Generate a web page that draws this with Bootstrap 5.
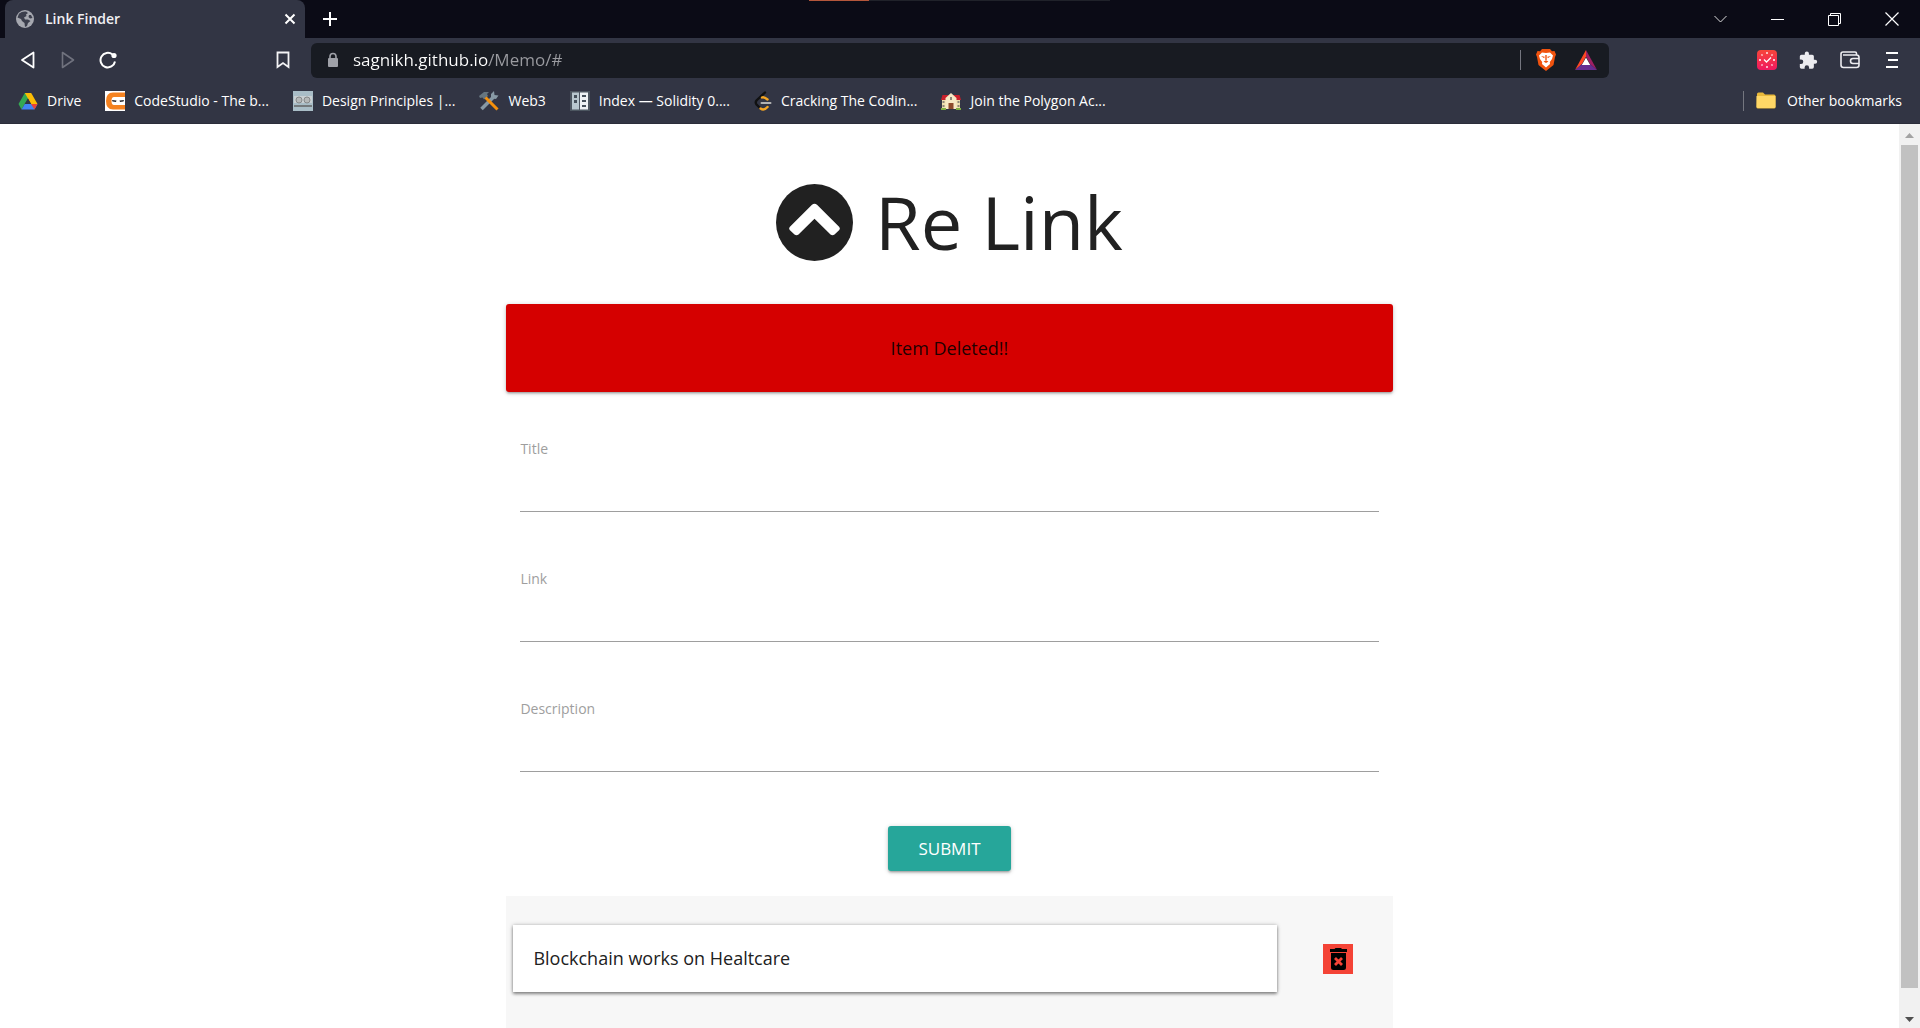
<!DOCTYPE html>
<html lang="en">
<head>
<meta charset="utf-8">
<meta name="viewport" content="width=device-width, initial-scale=1">
<title>Link Finder</title>
<link href="https://cdn.jsdelivr.net/npm/bootstrap@5.3.0/dist/css/bootstrap.min.css" rel="stylesheet">
<style>
  body { font-family: "Open Sans", "Noto Sans", sans-serif; background: #fff; }
  svg { display: block; flex: none; }
  button { color: inherit; }
  .icon-btn { background: none; border: 0; padding: 0; display: flex; align-items: center; justify-content: center; flex: none; }

  /* browser chrome */
  .tabstrip { background: #0b0b16; height: 38px; color: #fff; }
  .load-line { position: absolute; top: 0; left: 809px; width: 301px; height: 1px; background: #20222a; }
  .load-line::before { content: ""; display: block; width: 60px; height: 1px; background: #b5573b; }
  .browser-tab { background: #323544; width: 300px; margin-left: 5px; padding: 0 8px 0 11px; border-radius: 8px 8px 0 0; color: #f0f0f3; }
  .tab-title { font-size: 14px; line-height: 20px; font-weight: 600; margin-left: 11px; }
  .win-btn { width: 57px; height: 38px; }
  .toolbar { background: #323544; height: 44px; color: #f0f0f3; padding: 0 18px 0 12px; }
  .nav-btn { width: 32px; height: 32px; margin-right: 8px; }
  .save-btn { width: 32px; height: 32px; margin-left: 135px; margin-right: 12px; }
  .address { background: #181b22; height: 35px; border-radius: 6px; padding: 0 12px 0 14px; min-width: 0; }
  .address .icon-btn { margin-left: 15px; }
  .url-box { border: 0; outline: 0; padding: 0; margin-left: 12px; min-width: 0; font-size: 17px; line-height: 24px; color: transparent;
    background: linear-gradient(90deg, #fff 136px, #9a9ba0 136px); -webkit-background-clip: text; background-clip: text; }
  .extensions { margin-left: 148px; gap: 22px; }
  .divider { width: 1px; height: 20px; background: #74767f; flex: none; }
  .bookmarks { background: #323544; height: 42px; padding: 0 18px 4px 18px; font-size: 14px; line-height: 20px; gap: 24px; border-bottom: 1px solid #2b2d3a; }
  .bookmarks a { color: #fff; text-decoration: none; display: flex; align-items: center; gap: 9px; white-space: nowrap; }
  .bookmarks .other-marks { margin-left: -12px; gap: 11px; }

  /* page */
  .page-view { min-height: 0; overflow: hidden; }
  .scroll-track { width: 21px; background: #f1f1f1; flex: none; padding: 0 2px; }
  .scroll-thumb { background: #c1c1c1; }
  .sheet { width: 46.667%; padding-top: 43px; }
  .brand-title { font-size: 74px; line-height: 110px; font-weight: 400; color: #212121; gap: 22px; margin: 0 0 27px; }
  .z-shadow { box-shadow: 0 2px 2px 0 rgba(0,0,0,.14), 0 3px 1px -2px rgba(0,0,0,.12), 0 1px 5px 0 rgba(0,0,0,.2); }
  .z-shadow-strong { box-shadow: 0 2px 3px 0 rgba(0,0,0,.4), 0 0 4px 0 rgba(0,0,0,.25); }
  .notice { background: #d50000; color: rgba(0,0,0,.87); height: 88px; border-radius: 3px; font-size: 18px; margin-bottom: 30px; }
  .field { padding: 14px 14px 0; height: 130px; }
  .field label { display: block; color: #9e9e9e; font-size: 14px; line-height: 26px; }
  .field input { border: 0; border-bottom: 1px solid #9e9e9e; border-radius: 0; padding: 0; height: 50px; width: 100%; display: block; outline: 0; background: none; }
  .submit-btn { background: #26a69a; color: #fff; border: 0; border-radius: 3px; width: 123px; height: 45px; font-size: 17px; margin-top: 14px; }
  .link-list { background: #f7f7f7; padding: 29px 40px 60px 7px; margin-top: 25px; }
  .link-item { background: #fff; height: 67px; padding: 0 20px; font-size: 18px; color: #212121; text-decoration: none; }
  .delete-btn { background: #f44336; width: 30px; height: 30px; margin-left: 46px; color: #000; }
</style>
</head>
<body class="d-flex flex-column vh-100 overflow-hidden">
<header>
  <div class="tabstrip d-flex position-relative">
    <div class="load-line"></div>
    <div class="browser-tab d-flex align-items-center">
      <svg width="18" height="18" viewBox="0 0 18 18"><circle cx="9" cy="9" r="9" fill="#a6a8b0"/><path d="M3 3.800Q6 1 10 1.500L12 3 10 4.500 10.500 6 8 7.500 9 9.500H12L14.500 11 12 13 11 16 9 17 8.500 13 6 11 5 9 1.500 7.500ZM13 5 15 5 16.500 8 14 8.500 12.500 7Z" fill="#3b3e4c"/></svg>
      <span class="tab-title flex-grow-1">Link Finder</span>
      <button class="icon-btn" aria-label="Close tab"><svg width="14" height="14" viewBox="0 0 14 14" stroke="#fff" stroke-width="2"><path d="M2.500 2.500 11.500 11.500M11.500 2.500 2.500 11.500"/></svg></button>
    </div>
    <button class="icon-btn ms-3" aria-label="New tab"><svg width="18" height="16" viewBox="0 0 18 16" stroke="#fff" stroke-width="2"><path d="M9 1V15M2 8H16"/></svg></button>
    <div class="d-flex ms-auto">
      <button class="icon-btn win-btn" aria-label="Tabs"><svg width="14" height="14" viewBox="0 0 14 14" stroke="#ddd" fill="none"><path d="M.5 4 6.500 10 12.500 4"/></svg></button>
      <button class="icon-btn win-btn" aria-label="Minimise"><svg width="13" height="13" viewBox="0 0 13 13" stroke="#fff"><path d="M0 6.500H13"/></svg></button>
      <button class="icon-btn win-btn" aria-label="Restore"><svg width="13" height="13" viewBox="0 0 13 13" stroke="#fff" fill="none"><path d="M.5 2.500H10.500V12.500H.5ZM2.500 2V.5H12.500V10.500H11"/></svg></button>
      <button class="icon-btn win-btn" aria-label="Close"><svg width="14" height="14" viewBox="0 0 14 14" stroke="#fff" stroke-width="1.200"><path d="M.5.5 13.500 13.500M13.500.5.5 13.500"/></svg></button>
    </div>
  </div>
  <div class="toolbar d-flex align-items-center">
    <button class="icon-btn nav-btn" aria-label="Back"><svg width="16" height="18" viewBox="0 0 16 18" fill="none" stroke="#fff" stroke-width="1.800" stroke-linejoin="round"><path d="M13.500 1.500V16.500L2 9Z"/></svg></button>
    <button class="icon-btn nav-btn" aria-label="Forward"><svg width="16" height="18" viewBox="0 0 16 18" fill="none" stroke="#70727e" stroke-width="1.600" stroke-linejoin="round"><path d="M2.500 1.500V16.500L13.500 9Z"/></svg></button>
    <button class="icon-btn nav-btn" aria-label="Reload"><svg width="18" height="18" viewBox="0 0 18 18" fill="none" stroke="#fff" stroke-width="2"><path d="M13.500 3.500A7.300 7.300 0 1 0 16 10.500"/><circle cx="15" cy="4.500" r="2.600" fill="#fff" stroke="none"/></svg></button>
    <button class="icon-btn save-btn" aria-label="Bookmark this tab"><svg width="14" height="18" viewBox="0 0 14 18" fill="none" stroke="#f4f4f6" stroke-width="1.800"><path d="M1.500 1.500H12.500V16L7 12 1.500 16Z"/></svg></button>
    <div class="address d-flex align-items-center flex-grow-1">
      <svg width="16" height="16" viewBox="0 0 16 16"><rect x="3" y="6" width="10" height="9" rx="1" fill="#9fa1a8"/><path d="M5 7V4.500A3 3 0 0 1 11 4.500V7" fill="none" stroke="#9fa1a8" stroke-width="1.600"/></svg>
      <input class="url-box flex-grow-1" type="text" aria-label="Address" value="sagnikh.github.io/Memo/#">
      <span class="divider"></span>
      <button class="icon-btn" aria-label="Brave shields"><svg width="20" height="22" viewBox="0 0 20 22"><path d="M6 0H14L16 2.200 18.500 2 20 5.500 19 8 17.500 16 10 22 2.500 16 1 8 0 5.500 1.500 2 4 2.200Z" fill="#f0530f"/><path d="M6 3.500 10 4 14 3.500 17 6.500 16 10 13.800 13 14 15 10 18.500 6 15 6.200 13 4 10 3 6.500Z" fill="#fff"/><path d="M5 7 8.700 7.800 8.200 9.200ZM15 7 11.300 7.800 11.800 9.200ZM9.300 6H10.700V11H9.300ZM7.500 12.500 10 11.300 12.500 12.500 10 14Z" fill="#f0530f"/></svg></button>
      <button class="icon-btn ps-1" aria-label="Rewards"><svg width="22" height="20" viewBox="0 0 22 20"><path d="M11 0V6.500L7 14 0 20Z" fill="#ff4724"/><path d="M11 0 22 20 15 14 11 6.500Z" fill="#9e1f63"/><path d="M0 20 7 14H15L22 20Z" fill="#662d91"/><path d="M11 7.500 15.200 15H6.800Z" fill="#fff"/></svg></button>
    </div>
    <div class="extensions d-flex align-items-center">
      <button class="icon-btn" aria-label="Clock extension"><svg width="20" height="20" viewBox="0 0 20 20"><defs><linearGradient id="clk" x1="0" y1="0" x2="0" y2="1"><stop offset="0" stop-color="#f7463a"/><stop offset="1" stop-color="#f01860"/></linearGradient></defs><rect width="20" height="20" rx="4" fill="url(#clk)"/><path d="M10 2V4M10 16V18M2 10H4M16 10H18M4.500 4.500 5.500 5.500M15.500 4.500 14.500 5.500M4.500 15.500 5.500 14.500M15.500 15.500 14.500 14.500M7 9.500 9.500 12 14 7.500" fill="none" stroke="#fff" stroke-width="1.300"/></svg></button>
      <button class="icon-btn" aria-label="Extensions"><svg width="19" height="19" viewBox="1 1 23 22" fill="#ececf0"><path d="M20.500 11H19V7a2 2 0 0 0-2-2h-4V3.500a2.500 2.500 0 0 0-5 0V5H4a2 2 0 0 0-2 2v3.800h1.500a2.700 2.700 0 0 1 0 5.400H2V20a2 2 0 0 0 2 2h3.800v-1.500a2.700 2.700 0 0 1 5.400 0V22H17a2 2 0 0 0 2-2v-4h1.500a2.500 2.500 0 0 0 0-5z"/></svg></button>
      <button class="icon-btn" aria-label="Wallet"><svg width="20" height="18" viewBox="0 0 20 18" fill="none" stroke="#ececf0" stroke-width="1.600"><path d="M16.500 4V2.500Q16.500 1 15 1H3Q1 1 1 3V14Q1 16.500 3.500 16.500H16.500Q19 16.500 19 14V6.500Q19 4 16.500 4H3M19 7.500H13A2.500 2.500 0 0 0 13 12.500H19"/></svg></button>
      <button class="icon-btn px-1" aria-label="Menu"><svg width="12" height="18" viewBox="0 0 12 18" stroke="#fff" stroke-width="1.800"><path d="M0 2H12M2 9H12M0 16H12"/></svg></button>
    </div>
  </div>
  <nav class="bookmarks d-flex align-items-center" aria-label="Bookmarks">
    <a href="#"><svg width="20" height="18" viewBox="0 0 20 18"><path d="M6.800 1H13.200L10 6.500 3.500 17.500 0.500 12Z" fill="#34a853"/><path d="M6.800 1H13.200L19.500 12H13Z" fill="#fbbc04"/><path d="M6.800 12H19.500L16.500 17.500H3.500Z" fill="#4285f4"/><path d="M10 6.500 13.200 12H6.800Z" fill="#323544"/><path d="M13 12H19.500L16.500 17.500Z" fill="#ea4335"/></svg>Drive</a>
    <a href="#"><svg width="20" height="20" viewBox="0 0 20 20"><path d="M0 0H20V20H0Z" fill="#fff"/><path d="M20 1.500V6H9Q6.500 6 6.500 10T9 14H20V18.500H8Q1 18.500 1 10T8 1.500Z" fill="#f58220"/><path d="M7 9 11.500 9.500 11 11 7.500 10.500ZM19 9 14.500 9.500 15 11 18.500 10.500Z" fill="#26262b"/></svg>CodeStudio - The b...</a>
    <a href="#"><svg width="20" height="20" viewBox="0 0 20 20"><path d="M0 0H20V20H0Z" fill="#a9bdc7"/><path d="M1 5H19V12H1Z" fill="#c9cfd2"/><circle cx="6" cy="9" r="3" fill="#b5b8b9" stroke="#858889"/><circle cx="14" cy="9" r="3" fill="#b5b8b9" stroke="#858889"/><path d="M1 14H19V16H1Z" fill="#74797c"/></svg>Design Principles |...</a>
    <a href="#"><svg width="20" height="20" viewBox="0 0 20 20"><path d="M2.500 18 15 5.500" stroke="#8799a5" stroke-width="3.500"/><path d="M12 7V3L15 0 15.500 4 19.500 4.500 17 8Z" fill="#8799a5"/><path d="M1 7 0 5 5 1H10L8 3 9 5 5 8.500 3.500 6.500Z" fill="#66757f"/><path d="M6.500 6.500 18.500 18.500" stroke="#f4900c" stroke-width="3"/></svg>Web3</a>
    <a href="#"><svg width="20" height="20" viewBox="0 0 20 20"><path d="M0 0H20V20H0Z" fill="#4c5660"/><path d="M2 1.500H9V18.500H2Z" fill="#b8c8cf"/><path d="M10 1.500H18V18.500H10Z" fill="#edf2f4"/><path d="M4 4H7V7H4ZM4 9H7V12H4ZM12 4H16V6H12ZM12 9H16V11H12ZM12 14H16V16H12Z" fill="#45515b"/></svg>Index — Solidity 0....</a>
    <a href="#"><svg width="18" height="20" viewBox="0 0 18 20" fill="none" stroke-width="2.400" stroke-linecap="round"><path d="M11 1.500 2.500 9.500Q1 11.500 2.500 13.500L6 17" stroke="#111"/><path d="M6.500 17.500Q10 20 13.500 16M8 6.500Q10 5.500 13.500 8.500" stroke="#f5a623"/><path d="M7.500 12H16.500" stroke="#b3b3b3" stroke-width="2"/></svg>Cracking The Codin...</a>
    <a href="#"><svg width="20" height="18" viewBox="0 0 20 18"><path d="M1 7H19V17H1Z" fill="#efdfae"/><path d="M1.500 3H18.500L20 8H0Z" fill="#c9202b"/><path d="M4.500 6 10 1 15.500 6V17H4.500Z" fill="#f7e9c4"/><path d="M7.500 11H12.500V17H7.500Z" fill="#8d4b2c"/><path d="M1.500 9H3.500V11H1.500ZM1.500 13H3.500V15H1.500ZM16.500 9H18.500V11H16.500ZM16.500 13H18.500V15H16.500ZM9 5H11V8H9Z" fill="#8c8577"/><path d="M0 16H5V18H0ZM15 16H20V18H15Z" fill="#7fae45"/></svg>Join the Polygon Ac...</a>
    <span class="divider ms-auto"></span>
    <a href="#" class="other-marks"><svg width="20" height="17" viewBox="0 0 20 17"><path d="M1 2Q1 .5 2.500.5H7L9 2.500H18Q19.500 2.500 19.500 4V15Q19.500 16.500 18 16.500H2Q.5 16.500.5 15Z" fill="#e9b93a"/><path d="M.5 4H19.500V15Q19.500 16 18 16H2Q.5 16 .5 15Z" fill="#ffd766"/></svg>Other bookmarks</a>
  </nav>
</header>

<div class="page-view d-flex flex-grow-1">
  <main class="flex-grow-1">
    <div class="sheet mx-auto">
      <h1 class="brand-title d-flex align-items-center justify-content-center">
        <svg width="77" height="77" viewBox="0 0 77 77"><circle cx="38.500" cy="38.500" r="38.500" fill="#212121"/><path d="M13.700 42.900 36 20.800Q38.500 18.800 41 20.800L63.300 42.900Q64.500 44.500 63.300 46L58.500 50.600Q56.500 51.800 54.500 50.600L38.500 34.700 22.500 50.600Q20.500 51.800 18.500 50.600L13.700 46Q12.500 44.500 13.700 42.900Z" fill="#fff"/></svg>
        <span>Re Link</span>
      </h1>
      <div class="notice z-shadow d-flex align-items-center justify-content-center" role="alert">Item Deleted!!</div>
      <form>
        <div class="field"><label for="title">Title</label><input id="title" type="text"></div>
        <div class="field"><label for="link">Link</label><input id="link" type="text"></div>
        <div class="field"><label for="description">Description</label><input id="description" type="text"></div>
        <div class="d-flex justify-content-center"><button type="button" class="submit-btn z-shadow">SUBMIT</button></div>
      </form>
      <section class="link-list d-flex align-items-center">
        <a href="#" class="link-item z-shadow-strong d-flex align-items-center flex-grow-1">Blockchain works on Healtcare</a>
        <button class="icon-btn delete-btn" aria-label="Delete"><svg width="30" height="30" viewBox="0 0 30 30"><path d="M8 9H23V23.500Q23 26 20.500 26H10.500Q8 26 8 23.500ZM7 5H11.500L12.500 4H18L19 5H24V8H7Z"/><path d="M12 14 19 21M19 14 12 21" stroke="#f44336" stroke-width="2.800"/></svg></button>
      </section>
    </div>
  </main>
  <div class="scroll-track d-flex flex-column" aria-hidden="true">
    <svg width="17" height="21" viewBox="0 0 17 21"><path d="M4 14 8.500 9 13 14Z" fill="#a3a3a3"/></svg>
    <div class="scroll-thumb flex-grow-1"></div>
    <svg width="17" height="40" viewBox="0 0 17 40"><path d="M4 29 8.500 34 13 29Z" fill="#505050"/></svg>
  </div>
</div>
<script src="https://cdn.jsdelivr.net/npm/bootstrap@5.3.0/dist/js/bootstrap.bundle.min.js"></script>
</body>
</html>
